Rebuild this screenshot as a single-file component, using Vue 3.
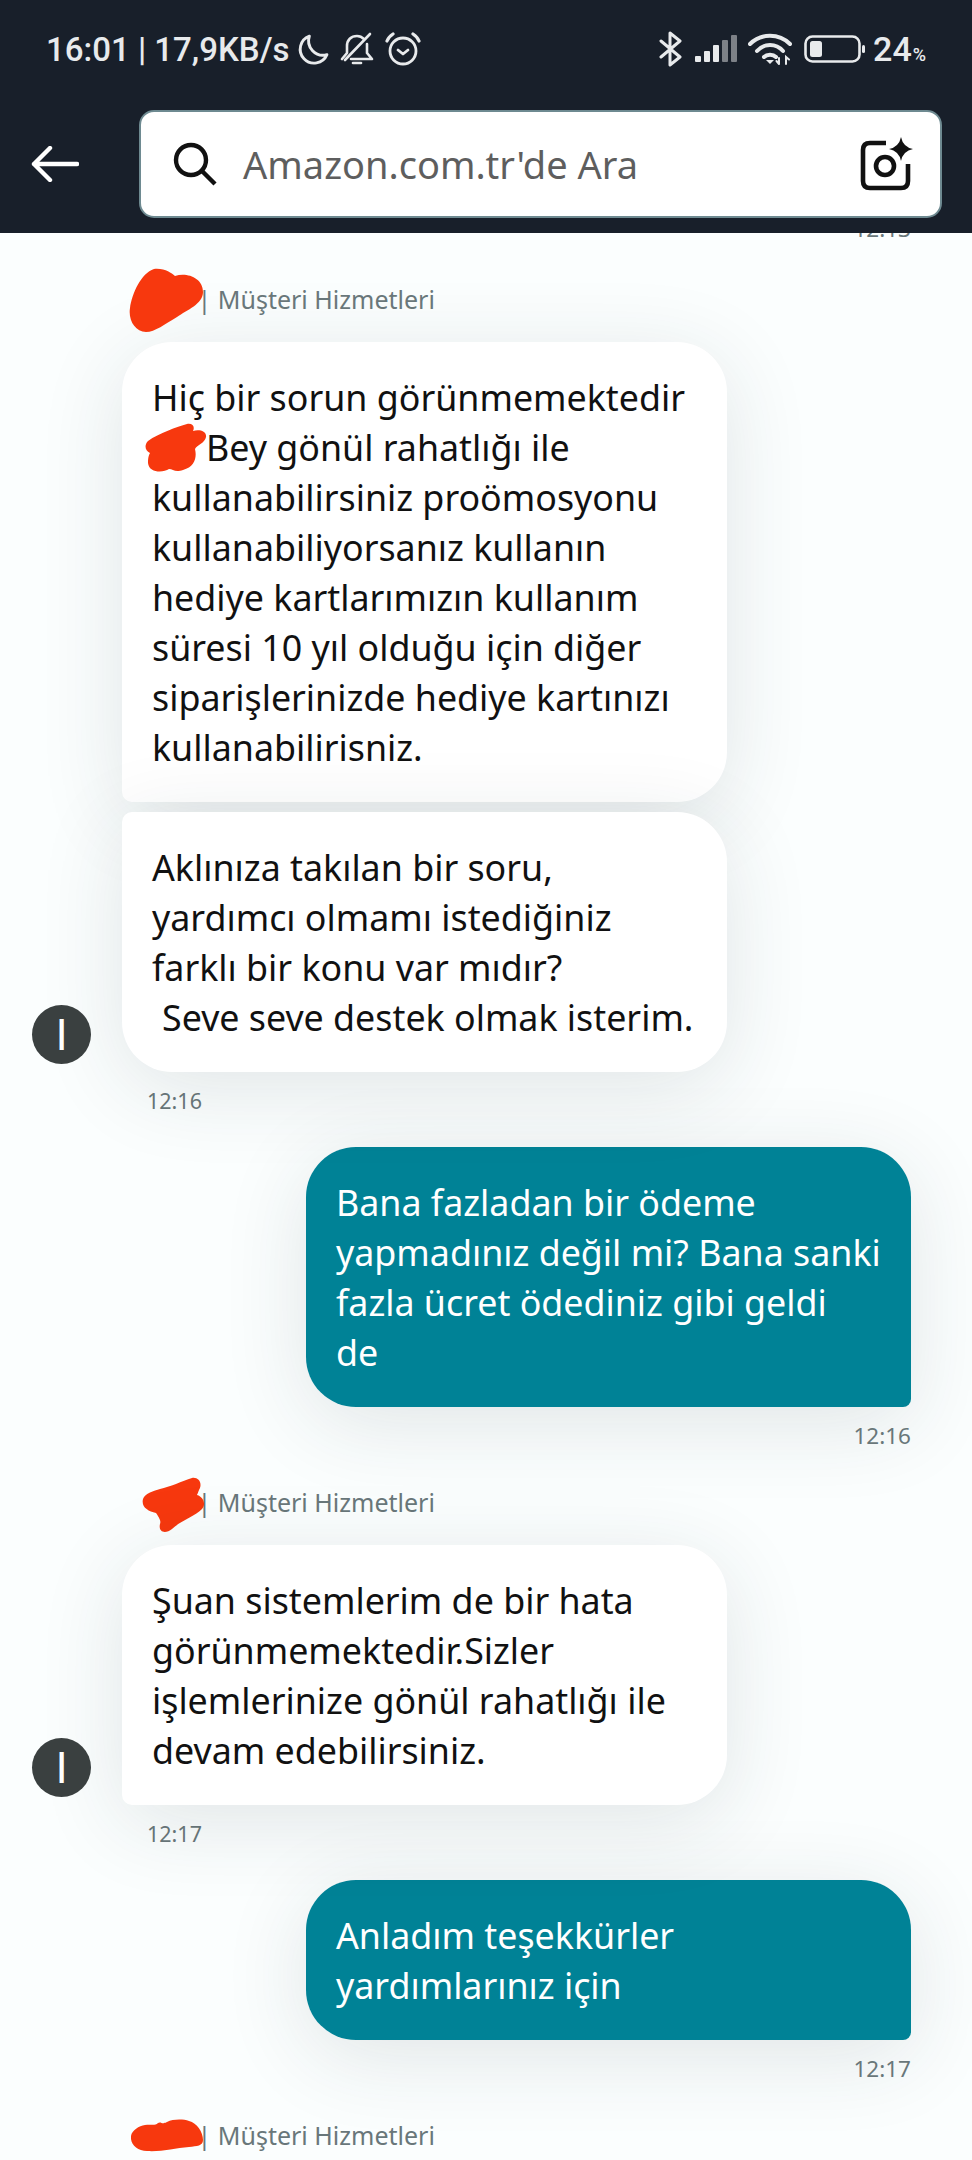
<template>
  <div class="screen">
    <header class="top">
      <div class="status">
        <div class="status-left">
          <span class="clock">16:01 | 17,9KB/s</span>
          <svg class="ic moon" width="33" height="33" viewBox="0 0 32 32" fill="none" stroke="#e8eaec" stroke-width="2.8"><path d="M13 3 A13.5 13.5 0 1 0 30 21 A14 14 0 0 1 13 3Z" stroke-linejoin="round"/></svg>
          <svg class="ic bell" width="34" height="34" viewBox="0 0 34 34" fill="none" stroke="#e8eaec" stroke-width="2.6" stroke-linecap="round" stroke-linejoin="round"><path d="M2 27 L7 21 V14 C7 8 11 4 17 4 C20 4 22 5 24 7"/><path d="M27 12 V21 L32 27 H11"/><path d="M13 31 H21"/><path d="M5 28 L30 2"/></svg>
          <svg class="ic alarm" width="36" height="34" viewBox="0 0 36 34" fill="none" stroke="#e8eaec" stroke-width="2.8" stroke-linecap="round" stroke-linejoin="round"><circle cx="18" cy="19" r="13"/><path d="M13 18 L18 22 L23 18"/><path d="M2 9 C3 6 5 4 8 2" stroke-width="3.2"/><path d="M34 9 C33 6 31 4 28 2" stroke-width="3.2"/></svg>
        </div>
        <div class="status-right">
          <svg width="24" height="36" viewBox="0 0 24 36" fill="none" stroke="#e8eaec" stroke-width="3" stroke-linejoin="round" stroke-linecap="round"><path d="M2 10 L21 26 L11 34 V2 L21 10 L2 26"/></svg>
          <svg class="signal" width="44" height="28" viewBox="0 0 44 28"><rect x="1" y="21" width="6" height="6" rx="1" fill="#e8eaec"/><rect x="10" y="16" width="6" height="11" rx="1" fill="#e8eaec"/><rect x="19" y="10" width="6" height="17" rx="1" fill="#e8eaec"/><rect x="28" y="5" width="6" height="22" rx="1" fill="#7d8187"/><rect x="37" y="0" width="6" height="27" rx="1" fill="#7d8187"/></svg>
          <svg class="wifi" width="44" height="32" viewBox="0 0 44 32" fill="none" stroke="#e8eaec" stroke-width="4" stroke-linecap="round"><path d="M2 11 C13 0 31 0 42 11"/><path d="M9 18 C16 10 28 10 35 18"/><path d="M16 24 C19 21 25 21 28 24"/><path d="M18 27 L22 31 L26 27 Z" fill="#e8eaec" stroke="none"/><path d="M31 25 L31 31 M28.5 28 L31 31 M38 31 V24 L41 26.5" stroke-width="2"/></svg>
          <svg class="battery" width="62" height="28" viewBox="0 0 62 28" fill="none"><rect x="1.5" y="1.5" width="54" height="25" rx="7" stroke="#e8eaec" stroke-width="2.6"/><rect x="6" y="6" width="12" height="16" rx="2.5" fill="#e8eaec"/><rect x="58" y="10" width="3" height="8" rx="1.5" fill="#e8eaec"/></svg>
          <span class="pct">24<small>%</small></span>
        </div>
      </div>
      <div class="search-row">
        <svg class="back" width="48" height="36" viewBox="0 0 48 36" fill="none" stroke="#fff" stroke-width="4.4" stroke-linecap="round" stroke-linejoin="round"><path d="M46 18 H3 M19 2 L3 18 L19 34"/></svg>
        <div class="search">
          <svg width="44" height="44" viewBox="0 0 44 44" fill="none" stroke="#111" stroke-width="4.4"><circle cx="18" cy="18" r="15"/><path d="M29 29 L42 42"/></svg>
          <span class="placeholder">Amazon.com.tr'de Ara</span>
          <svg class="cam" width="54" height="54" viewBox="0 0 54 54" fill="none"><path d="M26 6 H10 Q3 6 3 13 V44 Q3 51 10 51 H41 Q48 51 48 44 V27" stroke="#111" stroke-width="4.6"/><circle cx="25" cy="29" r="9" stroke="#111" stroke-width="4.6"/><path d="M41 0 Q43 10 53 12 Q43 14 41 24 Q39 14 29 12 Q39 10 41 0Z" fill="#111"/></svg>
        </div>
      </div>
    </header>

    <main class="chat">
      <div class="time right clipped">12:13</div>

      <div class="agent-name first-name">
        <span class="scrub-slot">
          <svg class="scrub scrub-a" width="76" height="66" viewBox="0 0 76 66"><path d="M25 1 C36 0 42 5 46 8 C58 4 74 10 74 24 C74 36 58 42 48 49 C36 56 26 64 17 64 C6 64 -1 52 1 40 C3 26 12 5 25 1Z" fill="#f7380e"/></svg>
        </span>
        | Müşteri Hizmetleri
      </div>

      <div class="group">
        <p class="bubble in b-first">
          Hiç bir sorun görünmemektedir<br>
          <span class="name-gap"><svg class="scrub scrub-b" width="62" height="50" viewBox="0 0 62 50"><path d="M42 1 C48 0 50 4 48 8 C54 6 62 8 61 14 C60 20 52 22 50 26 C52 34 50 44 38 47 C30 50 28 46 24 46 C18 50 4 50 3 40 C3 34 4 32 5 30 C0 28 -1 22 3 18 C14 10 32 4 42 1Z" fill="#f7380e"/></svg></span>Bey gönül rahatlığı ile<br>
          kullanabilirsiniz proömosyonu<br>
          kullanabiliyorsanız kullanın<br>
          hediye kartlarımızın kullanım<br>
          süresi 10 yıl olduğu için diğer<br>
          siparişlerinizde hediye kartınızı<br>
          kullanabilirisniz.
        </p>
        <div class="last-row">
          <div class="avatar">I</div>
          <p class="bubble in b-last">
            Aklınıza takılan bir soru,<br>
            yardımcı olmamı istediğiniz<br>
            farklı bir konu var mıdır?<br>
            <span class="indent">Seve seve destek olmak isterim.</span>
          </p>
        </div>
      </div>
      <div class="time left">12:16</div>

      <p class="bubble out">
        Bana fazladan bir ödeme<br>
        yapmadınız değil mi? Bana sanki<br>
        fazla ücret ödediniz gibi geldi<br>
        de
      </p>
      <div class="time right">12:16</div>

      <div class="agent-name">
        <span class="scrub-slot">
          <svg class="scrub scrub-c" width="64" height="56" viewBox="0 0 64 56"><path d="M50 1 C56 0 60 5 58 11 C56 15 56 16 55 18 C62 20 64 28 60 32 C52 40 38 44 30 52 C24 57 16 56 18 47 C19 44 18 42 14 36 C6 34 -1 30 1 22 C3 16 12 14 18 12 C28 10 40 4 50 1Z" fill="#f7380e"/></svg>
        </span>
        | Müşteri Hizmetleri
      </div>
      <div class="last-row">
        <div class="avatar">I</div>
        <p class="bubble in b-single">
          Şuan sistemlerim de bir hata<br>
          görünmemektedir.Sizler<br>
          işlemlerinize gönül rahatlığı ile<br>
          devam edebilirsiniz.
        </p>
      </div>
      <div class="time left">12:17</div>

      <p class="bubble out">
        Anladım teşekkürler<br>
        yardımlarınız için
      </p>
      <div class="time right">12:17</div>

      <div class="agent-name">
        <span class="scrub-slot">
          <svg class="scrub scrub-d" width="72" height="34" viewBox="0 0 72 34"><path d="M14 7 C20 6 24 8 27 5 C30 3 31 7 36 4 C42 1 52 1 58 3 C66 5 72 14 72 22 C72 28 66 28 58 29 C44 30 30 34 16 33 C6 33 -1 26 0 18 C1 12 8 8 14 7Z" fill="#f7380e"/></svg>
        </span>
        | Müşteri Hizmetleri
      </div>
    </main>
  </div>
</template>

<script setup>
</script>

<style>
html, body {
  margin: 0;
  background: #fff;
}
</style>

<style scoped>
.screen {
  width: 972px;
  height: 2160px;
  overflow: hidden;
  font-family: "Noto Sans", "Liberation Sans", sans-serif;
  background: #fff;
  position: relative;
}

.top {
  height: 233px;
  box-sizing: border-box;
  background: #181f2a;
  padding-top: 26px;
  position: relative;
  z-index: 2;
}

.status {
  height: 46px;
  padding: 0 46px;
  display: flex;
  justify-content: space-between;
  align-items: center;
  color: #e8eaec;
  font-family: Roboto, sans-serif;
}

.status-left,
.status-right {
  display: flex;
  align-items: center;
}

.clock {
  font-size: 33px;
  font-weight: 500;
  white-space: nowrap;
}

.moon { margin-left: 6px; }
.bell { margin-left: 11px; }
.alarm { margin-left: 11px; }

.signal { margin-left: 11px; }
.wifi { margin-left: 10px; }
.battery { margin-left: 12px; }

.pct {
  margin-left: 7px;
  font-size: 34px;
  font-weight: 500;
}

.pct small {
  font-size: 18px;
  margin-left: 1px;
}

.search-row {
  margin-top: 38px;
  display: flex;
  align-items: center;
  padding: 0 30px 0 31px;
}

.back {
  flex-shrink: 0;
  margin-right: 60px;
}

.search {
  flex: 1;
  height: 108px;
  box-sizing: border-box;
  background: #fff;
  border: 2px solid #6e8a91;
  border-radius: 15px;
  display: flex;
  align-items: center;
  padding: 0 26px 0 32px;
}

.placeholder {
  margin-left: 26px;
  font-size: 38px;
  color: #5e5e5e;
  white-space: nowrap;
}

.cam {
  margin-left: auto;
}

.chat {
  height: 1927px;
  overflow: hidden;
  padding: 0 61px 0 0;
  background: #fbfefe;
}

.time {
  font-size: 21.5px;
  line-height: 30px;
  color: #69777a;
}

.time.left {
  margin: 14px 0 0 147px;
}

.time.right {
  text-align: right;
  font-size: 22.5px;
  margin-top: 14px;
}

.time.clipped {
  margin-top: -19px;
}

.agent-name {
  margin: 33px 0 0 122px;
  height: 36px;
  line-height: 36px;
  font-size: 25px;
  color: #69777a;
  display: flex;
  align-items: center;
  white-space: pre;
  justify-content: flex-start;
}

.agent-name.first-name {
  margin-top: 37px;
}

.scrub-slot {
  display: inline-block;
  width: 82px;
  height: 36px;
  position: relative;
  margin-right: -13px;
}

.scrub {
  position: absolute;
}

.scrub-a { left: 7px; top: -13px; }
.scrub-c { left: 20px; top: -7px; }
.scrub-d { left: 9px; top: 1px; }

.group {
  margin-top: 25px;
}

.bubble {
  margin: 0;
  box-sizing: border-box;
  width: 605px;
  padding: 30px;
  font-size: 35.8px;
  line-height: 50px;
  color: #111;
  white-space: nowrap;
}

.bubble.in {
  margin-left: 122px;
  background: #fff;
  box-shadow: 0 16px 85px rgba(30, 50, 60, 0.12);
}

.last-row {
  display: flex;
  align-items: flex-end;
  position: relative;
}

.avatar {
  position: absolute;
  left: 32px;
  bottom: 8px;
  width: 59px;
  height: 59px;
  border-radius: 50%;
  background: #3a4040;
  color: #fff;
  font-family: "Liberation Sans", sans-serif;
  font-size: 44px;
  line-height: 59px;
  text-align: center;
}

.b-first {
  border-radius: 50px 50px 50px 10px;
}

.b-last {
  margin-top: 10px !important;
  border-radius: 10px 50px 50px 50px;
}

.b-single {
  margin-top: 25px !important;
  border-radius: 50px 50px 50px 10px;
}

.name-gap {
  display: inline-block;
  width: 54px;
  height: 30px;
  position: relative;
}

.scrub-b {
  left: -7px;
  top: -8px;
}

.indent {
  margin-left: 10px;
}

.bubble.out {
  margin: 31px 0 0 306px;
  background: #008296;
  color: #fff;
  border-radius: 50px 50px 8px 50px;
  box-shadow: 0 16px 85px rgba(30, 50, 60, 0.12);
}
</style>
